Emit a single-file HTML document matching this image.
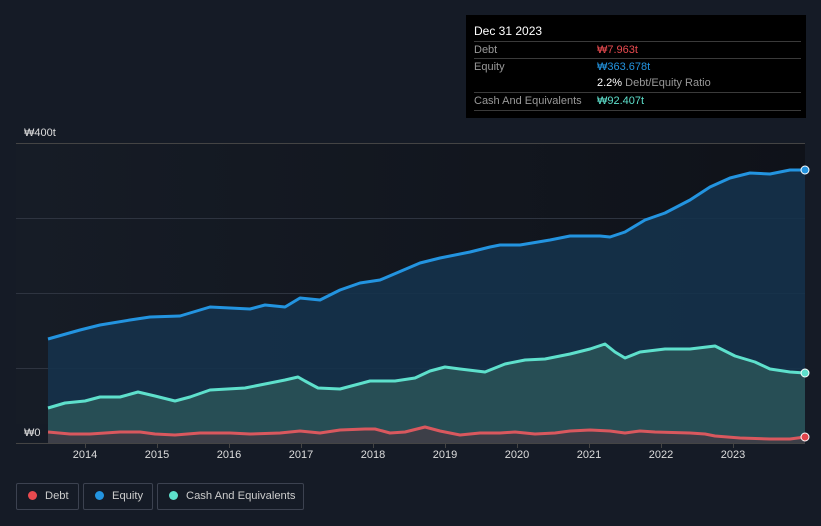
<!DOCTYPE html>
<html><head><meta charset="utf-8"><style>
body{margin:0;width:821px;height:526px;background:#151b26;font-family:"Liberation Sans","Noto Sans CJK KR",sans-serif;overflow:hidden;position:relative}
.tip{position:absolute;left:466px;top:15px;width:340px;height:103px;background:#000;color:#fff;font-size:11px}
.tip .r{position:absolute;left:8px;right:5px;border-top:1px solid #3a3a3a;height:17px;line-height:17px;color:#999}
.tip span{position:absolute;left:123px}
.leg{position:absolute;top:483px;height:27px;border:1px solid #3c4250;border-radius:2px;color:#ccc;font-size:11.2px;line-height:25px;box-sizing:border-box;white-space:nowrap}
.leg i{display:inline-block;width:9px;height:9px;border-radius:50%;margin:0 8px 0 11px;vertical-align:-1px}
.yr{position:absolute;top:449px;color:#ddd;font-size:11px;width:40px;margin-left:-20px;text-align:center}
</style></head><body>
<svg width="821" height="526" style="position:absolute;left:0;top:0">
<defs>
<linearGradient id="bg" x1="0" x2="1"><stop offset="0" stop-color="#161c26"/><stop offset="1" stop-color="#0f1219"/></linearGradient>
</defs>
<rect x="16" y="143" width="789" height="300" fill="url(#bg)"/>
<g stroke="#2e3440" stroke-width="1"><line x1="16" y1="143.5" x2="805" y2="143.5" stroke="#444"/><line x1="16" y1="218.5" x2="805" y2="218.5"/><line x1="16" y1="293.5" x2="805" y2="293.5"/><line x1="16" y1="368.5" x2="805" y2="368.5"/></g>
<path d="M48,339 L80,330 100,325 130,320 150,317 180,316 210,307 250,309 265,305 285,307 300,298 320,300 340,290 360,283 380,280 420,263 440,258 470,252 490,247 500,245 520,245 550,240 570,236 600,236 610,237 625,232 645,220 665,213 690,200 710,187 730,178 750,173 770,174 790,170 805,170 L805,443 48,443Z" fill="#15324b" opacity="0.9"/>
<path d="M48,408 L65,403 85,401 100,397 120,397 138,392 155,396 175,401 190,397 210,390 245,388 265,384 285,380 298,377 305,381 318,388 340,389 370,381 395,381 415,378 430,371 445,367 460,369 485,372 505,364 525,360 545,359 570,354 590,349 605,344 615,352 625,358 640,352 665,349 690,349 715,346 735,356 755,362 770,369 790,372 805,373 L805,443 48,443Z" fill="#2a5458" opacity="0.85"/>
<path d="M48,432 L70,434 90,434 120,432 140,432 155,434 175,435 200,433 230,433 250,434 280,433 300,431 320,433 340,430 365,429 375,429 390,433 405,432 425,427 440,431 460,435 480,433 500,433 515,432 535,434 555,433 570,431 590,430 610,431 625,433 640,431 655,432 690,433 705,434 715,436 740,438 770,439 790,439 805,437 L805,443 48,443Z" fill="#3d3f48"/>
<path d="M48,339 L80,330 100,325 130,320 150,317 180,316 210,307 250,309 265,305 285,307 300,298 320,300 340,290 360,283 380,280 420,263 440,258 470,252 490,247 500,245 520,245 550,240 570,236 600,236 610,237 625,232 645,220 665,213 690,200 710,187 730,178 750,173 770,174 790,170 805,170" fill="none" stroke="#2394e0" stroke-width="3" stroke-linejoin="round"/>
<path d="M48,408 L65,403 85,401 100,397 120,397 138,392 155,396 175,401 190,397 210,390 245,388 265,384 285,380 298,377 305,381 318,388 340,389 370,381 395,381 415,378 430,371 445,367 460,369 485,372 505,364 525,360 545,359 570,354 590,349 605,344 615,352 625,358 640,352 665,349 690,349 715,346 735,356 755,362 770,369 790,372 805,373" fill="none" stroke="#5ee0cc" stroke-width="3" stroke-linejoin="round"/>
<path d="M48,432 L70,434 90,434 120,432 140,432 155,434 175,435 200,433 230,433 250,434 280,433 300,431 320,433 340,430 365,429 375,429 390,433 405,432 425,427 440,431 460,435 480,433 500,433 515,432 535,434 555,433 570,431 590,430 610,431 625,433 640,431 655,432 690,433 705,434 715,436 740,438 770,439 790,439 805,437" fill="none" stroke="#d9585e" stroke-width="3" stroke-linejoin="round"/>
<line x1="16" y1="443.5" x2="805" y2="443.5" stroke="#444"/>
<g stroke="#444"><line x1="85.5" y1="443" x2="85.5" y2="448"/><line x1="157.5" y1="443" x2="157.5" y2="448"/><line x1="229.5" y1="443" x2="229.5" y2="448"/><line x1="301.5" y1="443" x2="301.5" y2="448"/><line x1="373.5" y1="443" x2="373.5" y2="448"/><line x1="445.5" y1="443" x2="445.5" y2="448"/><line x1="517.5" y1="443" x2="517.5" y2="448"/><line x1="589.5" y1="443" x2="589.5" y2="448"/><line x1="661.5" y1="443" x2="661.5" y2="448"/><line x1="733.5" y1="443" x2="733.5" y2="448"/></g>
<circle cx="805" cy="170" r="4" fill="#2394e0" stroke="#fff" stroke-width="1"/>
<circle cx="805" cy="373" r="4" fill="#5ee0cc" stroke="#fff" stroke-width="1"/>
<circle cx="805" cy="437" r="4" fill="#e0454b" stroke="#fff" stroke-width="1"/>
<rect x="16" y="424" width="32" height="18" fill="#151b26"/>
<text x="24" y="136" fill="#ddd" font-size="11" font-family="Liberation Sans, Noto Sans CJK KR, sans-serif">₩400t</text>
<text x="24" y="436" fill="#ddd" font-size="11" font-family="Liberation Sans, Noto Sans CJK KR, sans-serif">₩0</text>
</svg>
<div class="yr" style="left:85px">2014</div><div class="yr" style="left:157px">2015</div><div class="yr" style="left:229px">2016</div><div class="yr" style="left:301px">2017</div><div class="yr" style="left:373px">2018</div><div class="yr" style="left:445px">2019</div><div class="yr" style="left:517px">2020</div><div class="yr" style="left:589px">2021</div><div class="yr" style="left:661px">2022</div><div class="yr" style="left:733px">2023</div>
<div class="tip">
<div style="position:absolute;left:8px;top:9px;font-size:12px">Dec 31 2023</div>
<div class="r" style="top:26px">Debt<span style="color:#e84a4f">₩7.963t</span></div>
<div class="r" style="top:43px">Equity<span style="color:#2394e0">₩363.678t</span></div>
<div class="r" style="top:60px;border:0"><span style="color:#999"><b style="color:#fff;font-weight:normal">2.2%</b> Debt/Equity Ratio</span></div>
<div class="r" style="top:77px;border-bottom:1px solid #3a3a3a">Cash And Equivalents<span style="color:#5ee0cc">₩92.407t</span></div>
</div>
<div class="leg" style="left:16px;width:63px"><i style="background:#e84a4f"></i>Debt</div>
<div class="leg" style="left:83px;width:70px"><i style="background:#2394e0"></i>Equity</div>
<div class="leg" style="left:157px;width:147px"><i style="background:#5ee0cc"></i>Cash And Equivalents</div>
</body></html>
